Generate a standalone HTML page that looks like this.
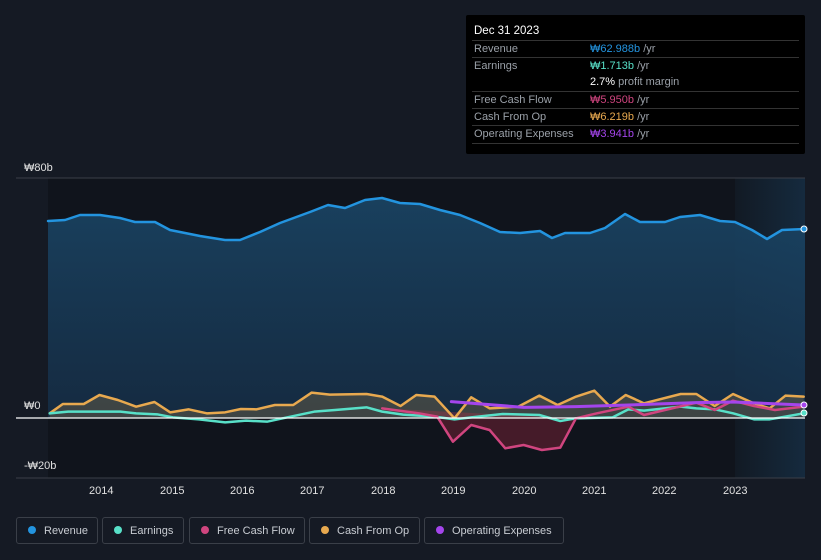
<!DOCTYPE html>
<html><head><meta charset="utf-8"><style>
body{margin:0;width:821px;height:560px;background:#151a24;font-family:"Liberation Sans","Noto Sans CJK KR",sans-serif;overflow:hidden;position:relative}
.tip{position:absolute;left:466px;top:15px;width:339px;height:139px;background:#000;border-radius:2px;font-size:11px;color:#9aa0a8}
.tip .h{color:#fff;font-size:11.5px;position:absolute;left:8px;top:10px}
.row{position:absolute;left:6px;width:327px;border-top:1px solid #333;height:17px}
.row span{position:absolute;top:2px}
.row .l{left:2px}.row .v{left:118px}
.leg{position:absolute;top:517px;height:27px;border:1px solid #3a3f48;border-radius:3px;color:#c8ccd2;font-size:11px;line-height:27px;box-sizing:border-box}
.leg i{display:inline-block;width:8px;height:8px;border-radius:50%;margin:0 8px 0 11px;vertical-align:-0px}
.ax{position:absolute;color:#e0e0e0;font-size:11px}
path{stroke-linejoin:round;stroke-linecap:round}
</style></head><body>
<svg width="821" height="560" style="position:absolute;left:0;top:0">
<defs>
<linearGradient id="rv" x1="0" y1="0" x2="0" y2="1"><stop offset="0" stop-color="#1a4565" stop-opacity=".9"/><stop offset="1" stop-color="#16304a" stop-opacity=".8"/></linearGradient>
<linearGradient id="fc" x1="0" y1="0" x2="1" y2="0"><stop offset="0" stop-color="#121a24"/><stop offset="1" stop-color="#152a3e"/></linearGradient>
</defs>
<rect x="48" y="178" width="757" height="300" fill="#10141c"/>
<rect x="735" y="178" width="70" height="300" fill="url(#fc)"/>
<line x1="16" y1="178" x2="805" y2="178" stroke="#3a3f48"/>
<line x1="16" y1="478" x2="805" y2="478" stroke="#3a3f48"/>
<path d="M48,221 65,220 80,215 100,215 120,218 135,222 155,222 170,230 200,236 225,240 240,240 260,232 280,223 310,212 328,205 345,208 365,200 382,198 400,203 420,204 440,210 460,215 480,223 500,232 520,233 540,231 552,238 565,233 590,233 605,228 625,214 640,222 665,222 680,217 700,215 720,221 735,222 752,230 767,239 782,230 805,229 L805,418 48,418Z" fill="url(#rv)"/>
<path d="M48,221 65,220 80,215 100,215 120,218 135,222 155,222 170,230 200,236 225,240 240,240 260,232 280,223 310,212 328,205 345,208 365,200 382,198 400,203 420,204 440,210 460,215 480,223 500,232 520,233 540,231 552,238 565,233 590,233 605,228 625,214 640,222 665,222 680,217 700,215 720,221 735,222 752,230 767,239 782,230 805,229" fill="none" stroke="#2394df" stroke-width="2.5"/>
<g transform="translate(0,380) scale(0.5236,0.3333)">
<path d="M95,100 120,72 160,72 190,45 225,60 260,80 295,66 325,97 360,88 395,100 430,97 460,87 490,88 525,75 560,75 595,38 630,44 700,42 730,50 765,78 795,45 830,50 868,115 900,52 935,85 990,80 1030,47 1065,75 1100,50 1135,32 1165,80 1195,45 1230,70 1300,42 1330,42 1365,78 1400,42 1440,70 1470,85 1500,47 1535,50 L1535,115 95,115Z" fill="#e8a94f" fill-opacity=".2"/>
<path d="M730,85 800,100 835,110 865,185 900,135 935,150 965,205 1000,195 1035,210 1070,203 1100,115Z" fill="#c0304a" fill-opacity=".3"/>
<path d="M95,100 120,72 160,72 190,45 225,60 260,80 295,66 325,97 360,88 395,100 430,97 460,87 490,88 525,75 560,75 595,38 630,44 700,42 730,50 765,78 795,45 830,50 868,115 900,52 935,85 990,80 1030,47 1065,75 1100,50 1135,32 1165,80 1195,45 1230,70 1300,42 1330,42 1365,78 1400,42 1440,70 1470,85 1500,47 1535,50" fill="none" stroke="#e8a94f" stroke-width="2.5" vector-effect="non-scaling-stroke"/>
<path d="M95,100 130,95 230,95 260,100 300,103 330,112 380,118 430,127 470,122 510,125 540,115 600,95 640,90 700,82 730,95 770,104 830,110 868,118 900,112 960,102 1030,105 1070,123 1100,115 1170,112 1200,88 1230,92 1300,80 1330,85 1365,88 1400,100 1440,118 1470,118 1500,110 1535,100" fill="none" stroke="#58e0c8" stroke-width="2.5" vector-effect="non-scaling-stroke"/>
<path d="M730,85 800,100 835,110 865,185 900,135 935,150 965,205 1000,195 1035,210 1070,203 1100,115 1140,100 1200,80 1230,105 1270,90 1330,68 1365,90 1400,62 1440,78 1480,90 1535,80" fill="none" stroke="#d0457f" stroke-width="2.5" vector-effect="non-scaling-stroke"/>
<path d="M862,65 1000,82 1100,80 1200,75 1330,68 1400,66 1535,75" fill="none" stroke="#a445ec" stroke-width="3" vector-effect="non-scaling-stroke"/>
</g>
<line x1="16" y1="418" x2="805" y2="418" stroke="#fff" stroke-width="1.2"/>
<circle cx="804" cy="229" r="3" fill="#2394df" stroke="#fff"/>
<circle cx="804" cy="413" r="3" fill="#58e0c8" stroke="#fff"/>
<circle cx="804" cy="405" r="3" fill="#a445ec" stroke="#fff"/>
</svg>
<div class="ax" style="left:24px;top:162px">₩80b</div>
<div class="ax" style="left:24px;top:400px">₩0</div>
<div class="ax" style="left:24px;top:460px">-₩20b</div>
<div class="ax" style="left:89px;top:485px">2014</div>
<div class="ax" style="left:160px;top:485px">2015</div>
<div class="ax" style="left:230px;top:485px">2016</div>
<div class="ax" style="left:300px;top:485px">2017</div>
<div class="ax" style="left:371px;top:485px">2018</div>
<div class="ax" style="left:441px;top:485px">2019</div>
<div class="ax" style="left:512px;top:485px">2020</div>
<div class="ax" style="left:582px;top:485px">2021</div>
<div class="ax" style="left:652px;top:485px">2022</div>
<div class="ax" style="left:723px;top:485px">2023</div>
<div class="tip">
<div class="h">Dec 31 2023</div>
<div class="row" style="top:25px"><span class="l">Revenue</span><span class="v"><b style="color:#2394df;font-weight:normal">₩62.988b</b> /yr</span></div>
<div class="row" style="top:42px"><span class="l">Earnings</span><span class="v"><b style="color:#58e0c8;font-weight:normal">₩1.713b</b> /yr</span></div>
<div class="row" style="top:59px;border:0"><span class="v"><b style="color:#fff;font-weight:normal">2.7%</b> profit margin</span></div>
<div class="row" style="top:76px"><span class="l">Free Cash Flow</span><span class="v"><b style="color:#d0457f;font-weight:normal">₩5.950b</b> /yr</span></div>
<div class="row" style="top:93px"><span class="l">Cash From Op</span><span class="v"><b style="color:#e8a94f;font-weight:normal">₩6.219b</b> /yr</span></div>
<div class="row" style="top:110px"><span class="l">Operating Expenses</span><span class="v"><b style="color:#a445ec;font-weight:normal">₩3.941b</b> /yr</span></div>
<div class="row" style="top:128px"></div>
</div>
<div class="leg" style="left:16px;width:82px"><i style="background:#2394df"></i>Revenue</div>
<div class="leg" style="left:102px;width:82px"><i style="background:#58e0c8"></i>Earnings</div>
<div class="leg" style="left:189px;width:116px"><i style="background:#d0457f"></i>Free Cash Flow</div>
<div class="leg" style="left:309px;width:111px"><i style="background:#e8a94f"></i>Cash From Op</div>
<div class="leg" style="left:424px;width:140px"><i style="background:#a445ec"></i>Operating Expenses</div>
</body></html>
